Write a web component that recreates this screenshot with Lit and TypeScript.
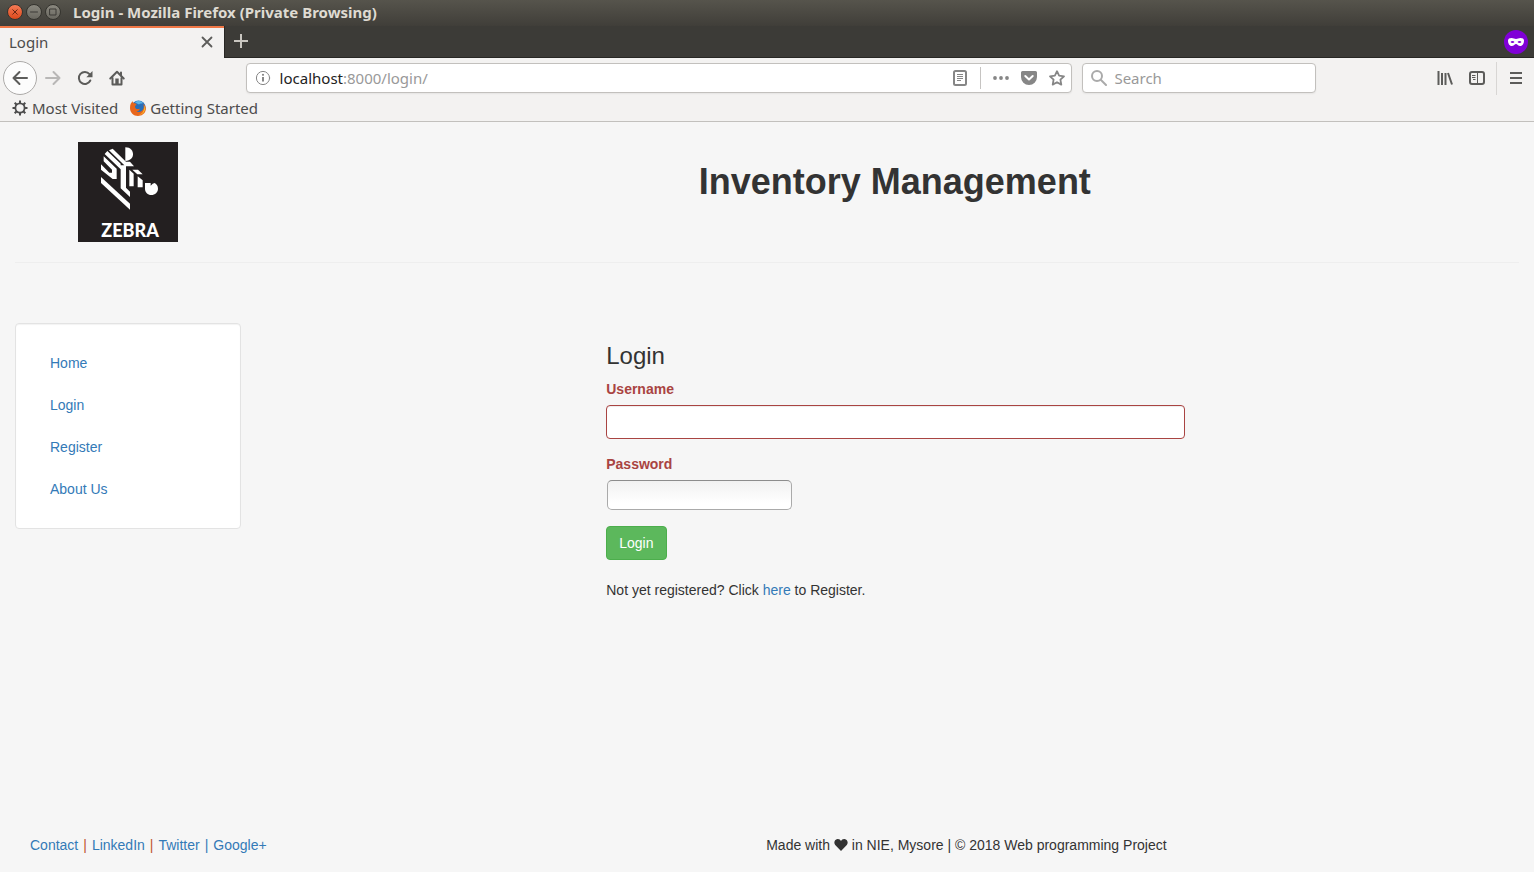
import { LitElement, html, css, svg } from "lit";
import { customElement } from "lit/decorators.js";

const icon = (size: number, body: unknown, cls = "") =>
  html`<svg class=${cls} width=${size} height=${size} viewBox="0 0 16 16" fill="none" stroke="currentColor" stroke-width="2" stroke-linecap="round" stroke-linejoin="round" aria-hidden="true">${body}</svg>`;

const back = svg`<path d="M15 8H1.500M7.500 2L1.500 8l6 6"/>`;
const forward = svg`<path d="M1 8h13.500M8.500 2l6 6-6 6"/>`;
const reload = svg`<path d="M13.300 10.500A6 6 0 1 1 12.500 4.100"/><path d="M15.500 1v6.200h-6.200z" fill="currentColor" stroke="none"/>`;
const home = svg`<path d="M1.300 8.500L8 1.800l6.700 6.700" /><path d="M3.500 8v6.500h9V8M12 2.500v3"/><path d="M6.300 14V8.500h3.400V14z" fill="currentColor" stroke="none"/>`;
const info = svg`<circle cx="8" cy="8" r="6.600" stroke-width="1"/><path d="M8 7v4.500" stroke-width="2" stroke-linecap="butt"/><circle cx="8" cy="4.800" r="1.100" fill="currentColor" stroke="none"/>`;
const reader = svg`<rect x="2" y="1" width="12" height="14" rx="1.500"/><path d="M5 4.500h6M5 6.500h6M5 8.500h6M5 10.500h4" stroke-width="1" stroke-linecap="butt"/>`;
const dots = svg`<g fill="currentColor" stroke="none"><circle cx="2" cy="8" r="1.900"/><circle cx="8" cy="8" r="1.900"/><circle cx="14" cy="8" r="1.900"/></g>`;
const pocket = svg`<path d="M1.500 1h13A1.500 1.500 0 0 1 16 2.500V7A8 8 0 0 1 0 7V2.500A1.500 1.500 0 0 1 1.500 1z" fill="currentColor" stroke="none"/><path d="M4.300 6L8 9.500 11.700 6" stroke="#fff"/>`;
const star = svg`<path d="M8 1.200l2.100 4.500 4.900.6-3.600 3.400.9 4.900L8 12.200l-4.300 2.400.9-4.900L1 6.300l4.900-.6z" stroke-width="1.800"/>`;
const lens = svg`<circle cx="6" cy="6" r="5"/><path d="M10 10l5 5"/>`;
const library = svg`<path d="M1.500 1v14M5 3v12M8.500 3v12M11 3l4 11.500" stroke-linecap="butt"/>`;
const sidebar = svg`<rect x="1" y="2" width="14" height="12" rx="2"/><path d="M8.500 2v12M3 5.500h3.500M3 7.500h3.500M4 9.500h2.500" stroke-width="1" stroke-linecap="butt"/>`;
const menu = svg`<path d="M2 3h12M2 8h12M2 13h12" stroke-linecap="butt"/>`;
const close = svg`<path d="M3.500 3.500l9 9M12.500 3.500l-9 9" stroke-width="1.800"/>`;
const plus = svg`<path d="M8 1v14M1 8h14" stroke-linecap="butt"/>`;
const gear = svg`<circle cx="8" cy="8" r="4.600" stroke-width="1.800"/><path d="M8 .5v3M8 12.500v3M.5 8h3M12.500 8h3M2.700 2.700l2 2M11.300 11.300l2 2M13.300 2.700l-2 2M4.700 11.300l-2 2" stroke-linecap="butt"/>`;

@customElement("app-root")
export class AppRoot extends LitElement {
  static styles = css`
    :host {
      display: flex;
      flex-direction: column;
      min-height: 100vh;
      background: #f6f6f6;
      color: #333;
      font: 14px/20px "Liberation Sans", Arial, sans-serif;
    }
    * { box-sizing: border-box; }
    svg { display: block; flex: none; }
    button, input { font: inherit; color: inherit; }
    a { color: #337ab7; text-decoration: none; }
    .chrome { font-family: "Noto Sans", "Open Sans", sans-serif; font-size: 15px; color: #4c4c4c; }
    .icon-button {
      display: flex; align-items: center; justify-content: center;
      border: 0; padding: 0; background: none; flex: none;
    }

    .titlebar {
      display: flex; align-items: center; gap: 3px;
      height: 26px; padding: 0 7px;
      background: linear-gradient(#56544c, #403e39);
      color: #dfdbd2;
    }
    .window-title { font-weight: 700; line-height: 24px; padding: 0 0 2px 9px; white-space: nowrap; }
    .window-button {
      display: flex; align-items: center; justify-content: center;
      width: 16px; height: 16px; padding: 0; margin-bottom: 2px;
      border: 1px solid #35342f; border-radius: 50%;
      background: linear-gradient(#8a887f, #6a6860); color: #3c3b37;
    }
    .window-button.close { background: linear-gradient(#f47b56, #dd4a1c); color: #5a2010; }

    .tabs { display: flex; height: 32px; background: #3c3b37; border-bottom: 1px solid #282724; }
    .tab {
      display: flex; align-items: center; justify-content: space-between;
      width: 224px; margin-bottom: -1px; padding: 0 9px 2px;
      background: #f3f2f1; border-top: 2px solid #f07746;
    }
    .tab-close { width: 16px; height: 16px; color: #5c5c5a; }
    .new-tab { width: 33px; padding-bottom: 2px; color: #c9c6c0; border-left: 1px solid #282724; }
    .private {
      display: flex; align-items: center; justify-content: center;
      width: 24px; height: 24px; margin: 4px 6px 0 auto;
      border-radius: 50%; background: #8000d7;
    }

    .toolbar {
      display: flex; align-items: center;
      height: 40px; padding: 0 2px 0 3px;
      background: #f3f2f1; color: #5c5c5a;
    }
    .nav { width: 32px; height: 32px; }
    .nav.back { width: 34px; height: 34px; border: 1px solid #acaaa8; border-radius: 50%; background: #fcfcfc; }
    .nav.disabled { color: #b8b7b6; }
    .spacer { flex: 5; }
    .field {
      display: flex; align-items: center;
      height: 30px; background: #fff; color: #868686;
      border: 1px solid #c2c0bd; border-radius: 4px;
      box-shadow: 0 1px 2px rgba(0, 0, 0, 0.06);
    }
    .url { flex: 36; padding: 0 6px 0 8px; }
    .address { flex: 1; padding: 0 9px; white-space: nowrap; color: #999; }
    .host { color: #222; }
    .url-actions { display: flex; align-items: center; gap: 12px; }
    .divider { width: 1px; height: 22px; background: #c6c4c2; }
    .search { width: 234px; margin-left: 10px; padding: 0 8px; gap: 7px; color: #aaa; }
    .search-input { flex: 1; min-width: 0; border: 0; padding: 0; background: none; outline: 0; }
    .search-input::placeholder { color: #999; opacity: 1; }
    .menu-separator { width: 1px; height: 33px; margin: 0 3px; background: #d8d6d4; }

    .bookmarks {
      display: flex; gap: 12px; height: 24px; padding: 0 12px 4px;
      background: #f3f2f1; border-bottom: 1px solid #c2c0bd;
    }
    .bookmark { display: flex; align-items: center; gap: 4px; color: #4c4c4c; white-space: nowrap; }

    .header { display: grid; grid-template-columns: 1fr 5fr; padding: 20px 0; }
    .logo { justify-self: center; }
    .brand { fill: #fff; font: 900 18px "Lato", "Liberation Sans", sans-serif; }
    .title { margin: 20px 0 0; font-size: 36px; line-height: 40px; text-align: center; }
    .rule { height: 1px; margin: 0 15px 60px; border: 0; background: #eee; }

    .content { display: grid; grid-template-columns: 1fr 5fr; flex: 1; align-items: start; }
    .side {
      margin: 0 15px; padding: 19px;
      background: #fff; border: 1px solid #e3e3e3; border-radius: 4px;
      box-shadow: inset 0 1px 1px rgba(0, 0, 0, 0.05);
    }
    .menu-list { list-style: none; margin: 0; padding: 0; display: grid; gap: 2px; }
    .menu-link { display: block; padding: 10px 15px; }
    .main { width: 50%; margin: 0 auto; padding: 20px 29px 0 31px; }
    .form-title { margin: 0 0 10px; font-size: 24px; font-weight: 500; line-height: 26px; }
    .group { margin-bottom: 15px; }
    .label { display: block; margin-bottom: 6px; font-weight: 700; color: #a94442; }
    .input {
      display: block; width: 100%; height: 34px; padding: 6px 12px;
      background: #fff; border: 1px solid #a94442; border-radius: 4px;
      box-shadow: inset 0 1px 1px rgba(0, 0, 0, 0.075);
    }
    .plain {
      display: block; width: 185px; height: 30px; margin: 0 1px 16px; padding: 4px 6px;
      background: linear-gradient(#f1f1f1, #fff 80%); border: 1px solid #aaa; border-top-color: #8c8c8c; border-radius: 5px;
    }
    .submit {
      height: 34px; padding: 0 12px; color: #fff;
      background: #5cb85c; border: 1px solid #4cae4c; border-radius: 4px;
    }
    .hint { margin: 20px 0 0; }

    .footer { display: grid; grid-template-columns: 26% 1fr; padding-bottom: 17px; }
    .links { display: flex; gap: 5px; padding-left: 30px; white-space: nowrap; }
    .sep { color: #c0562f; }
    .sep.last { color: #337ab7; }
    .credit { text-align: center; }
    .heart { display: inline-block; vertical-align: -2px; }
  `;

  render() {
    return html`
      <div class="chrome">
        <div class="titlebar">
          <button class="window-button close" aria-label="Close window">${icon(8, close)}</button>
          <button class="window-button" aria-label="Minimize">${icon(8, svg`<path d="M1 8h14"/>`)}</button>
          <button class="window-button" aria-label="Maximize">${icon(8, svg`<rect x="2" y="2" width="12" height="12"/>`)}</button>
          <span class="window-title">Login - Mozilla Firefox (Private Browsing)</span>
        </div>
        <div class="tabs">
          <div class="tab">
            <span>Login</span>
            <button class="icon-button tab-close" aria-label="Close tab">${icon(16, close)}</button>
          </div>
          <button class="icon-button new-tab" aria-label="New tab">${icon(16, plus)}</button>
          <span class="private">
            <svg width="16" height="8" viewBox="0 0 16 8" aria-hidden="true">
              <path fill="#fff" fill-rule="evenodd" d="M0 2.500C0 .8 1.500 0 3.500 0 5.500 0 6.500.9 8 .9S10.500 0 12.500 0C14.500 0 16 .8 16 2.500 16 5.500 14.500 8 12.300 8 10 8 9.300 6 8 6S6 8 3.700 8C1.500 8 0 5.500 0 2.500zM2.500 4c.8 1.400 3.200 1.400 4 0-.8-1.400-3.200-1.400-4 0zM9.500 4c.8 1.400 3.200 1.400 4 0-.8-1.400-3.200-1.400-4 0z"/>
            </svg>
          </span>
        </div>
        <div class="toolbar">
          <button class="icon-button nav back" aria-label="Back">${icon(16, back)}</button>
          <button class="icon-button nav disabled" aria-label="Forward">${icon(16, forward)}</button>
          <button class="icon-button nav" aria-label="Reload">${icon(16, reload)}</button>
          <button class="icon-button nav" aria-label="Home">${icon(16, home)}</button>
          <span class="spacer"></span>
          <div class="field url">
            ${icon(16, info)}
            <span class="address"><span class="host">localhost</span>:8000/login/</span>
            <div class="url-actions">
              <button class="icon-button" aria-label="Reader view">${icon(16, reader)}</button>
              <span class="divider"></span>
              <button class="icon-button" aria-label="Page actions">${icon(16, dots)}</button>
              <button class="icon-button" aria-label="Save to Pocket">${icon(16, pocket)}</button>
              <button class="icon-button" aria-label="Bookmark this page">${icon(16, star)}</button>
            </div>
          </div>
          <div class="field search">
            ${icon(16, lens)}
            <input class="search-input" type="text" placeholder="Search" aria-label="Search" />
          </div>
          <span class="spacer"></span>
          <button class="icon-button nav" aria-label="Library">${icon(16, library)}</button>
          <button class="icon-button nav" aria-label="Sidebars">${icon(16, sidebar)}</button>
          <span class="menu-separator"></span>
          <button class="icon-button nav" aria-label="Menu">${icon(16, menu)}</button>
        </div>
        <div class="bookmarks">
          <a class="bookmark" href="#">${icon(16, gear)}Most Visited</a>
          <a class="bookmark" href="#">
            <svg width="16" height="16" viewBox="0 0 16 16" aria-hidden="true">
              <circle cx="8.500" cy="7.500" r="7" fill="#2a6fb8"/>
              <path d="M5 2.500C7 .5 11 .5 13 3c-1 1-3 0-4 1.500z" fill="#5fb4e5"/>
              <path d="M.8 3.500C1.500 3 2 1.500 2.500 1c0 1 .5 1.800 1.500 2.300 1 0 2 .2 2.500.7-.3 1.200-1.500 1.500-1.500 3 .5 2.500 3.500 2.500 5 1.500-.5 2-2 3-3.500 3 3 1.500 6 0 7-3 .5-1.500.3-3-.3-4.500C15.500 5.500 16.500 8 15.500 10.800 14.500 14 11.500 16 8 16 3.500 16 0 12.500 0 8c0-1.800.2-3.300.8-4.500z" fill="#e8661b"/>
              <path d="M14.500 5.500c1 2 .8 4.500-.5 6.500-1.500 2.300-4 3.200-6 3 4-.5 6.500-4 6.500-9.500z" fill="#fbc42d"/>
            </svg>
            Getting Started
          </a>
        </div>
      </div>

      <header class="header">
        <svg class="logo" width="100" height="100" viewBox="0 0 100 100" role="img" aria-label="Zebra">
          <rect width="100" height="100" fill="#231f20"/>
          <g fill="#fff" transform="translate(20 1) scale(0.3333)">
            <path d="M9 102L96 182V200L9 120z"/>
            <path d="M9 64L34 89H42V80L17 55V40L56 77V108H44L9 80z"/>
            <path d="M20 33L28 24L68 62V67L79 67L33 22L44 17L84 56H96L108 70H84V134L96 146V162L68 136V79z"/>
            <path d="M82 13C98 13 105 24 105 34C105 44 98 53 82 54z"/>
            <path d="M94 80L107 92V130H94z"/>
            <path d="M103 80H120L134 94H118z"/>
            <path d="M119 100L134 112V133H119z"/>
            <path d="M141 120H158V128L164 122L170 120C176 123 180 129 180 137C180 148 171 156 160 156C149 156 141 148 141 137z"/>
          </g>
          <text class="brand" x="52" y="95" text-anchor="middle">ZEBRA</text>
        </svg>
        <h1 class="title">Inventory Management</h1>
      </header>
      <hr class="rule" />

      <div class="content">
        <nav class="side">
          <ul class="menu-list">
            ${["Home", "Login", "Register", "About Us"].map(
              (name) => html`<li><a class="menu-link" href="#">${name}</a></li>`
            )}
          </ul>
        </nav>
        <main class="main">
          <h2 class="form-title">Login</h2>
          <form>
            <div class="group">
              <label class="label" for="username">Username</label>
              <input class="input" id="username" type="text" />
            </div>
            <label class="label" for="password">Password</label>
            <input class="plain" id="password" type="password" />
            <button class="submit" type="button">Login</button>
          </form>
          <p class="hint">Not yet registered? Click <a href="#">here</a> to Register.</p>
        </main>
      </div>

      <footer class="footer">
        <div class="links">
          <a href="#">Contact</a><span class="sep">|</span>
          <a href="#">LinkedIn</a><span class="sep">|</span>
          <a href="#">Twitter</a><span class="sep last">|</span>
          <a href="#">Google+</a>
        </div>
        <div class="credit">
          Made with
          <svg class="heart" width="14" height="14" viewBox="0 0 14 14" role="img" aria-label="love"><path d="M7 13L1.200 7C-.5 5 .3 1.500 3.500 1 5 .8 6.300 1.500 7 3c.7-1.500 2-2.200 3.500-2 3.200.5 4 4 2.300 6z" fill="#333"/></svg>
          in NIE, Mysore | © 2018 Web programming Project
        </div>
      </footer>
    `;
  }
}
